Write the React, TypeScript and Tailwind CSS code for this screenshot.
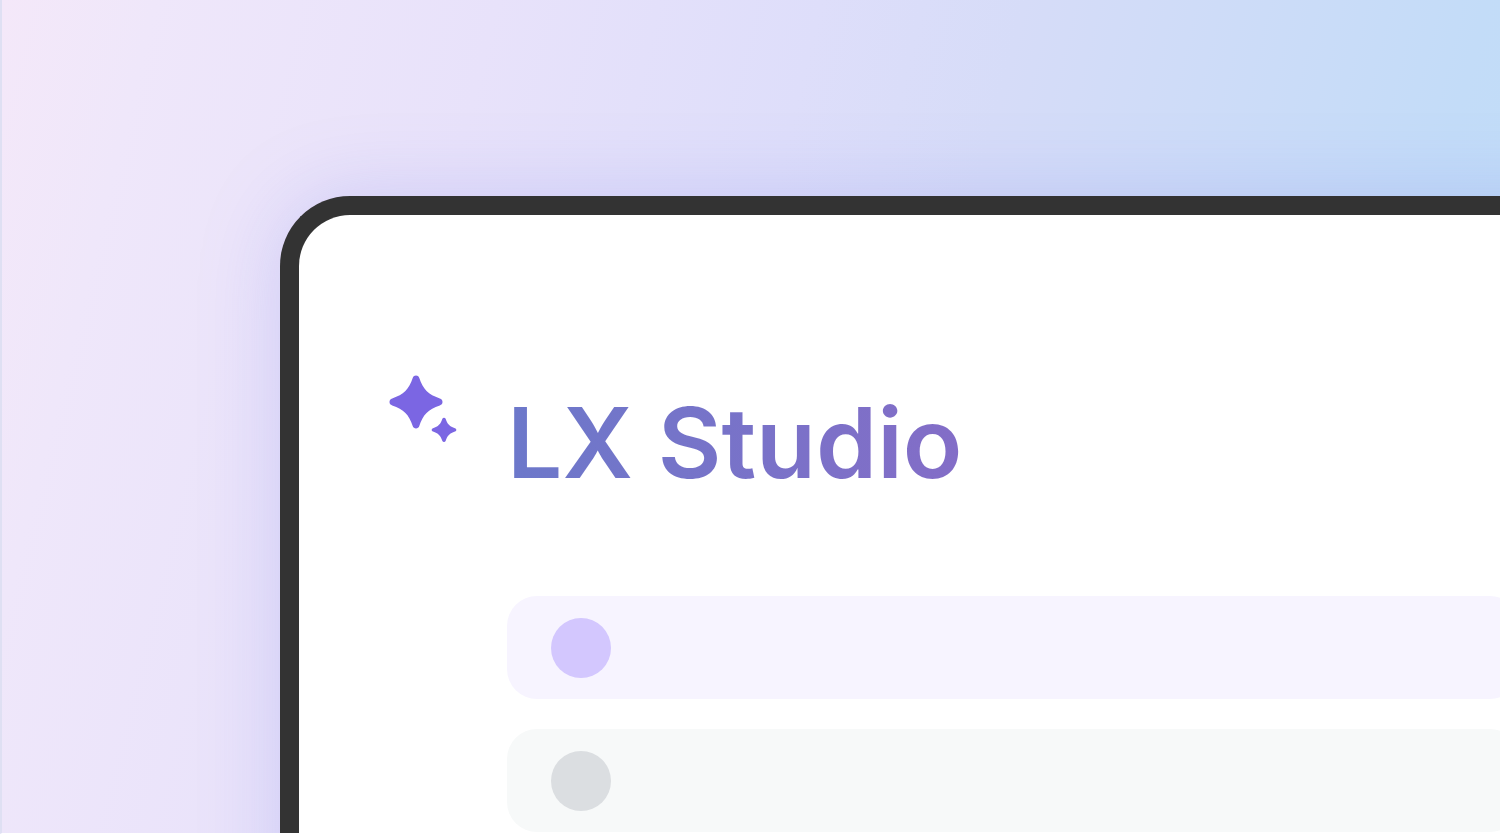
import React from 'react';

interface StudioRow {
  id: string;
  rowClass: string;
  dotClass: string;
}

const rows: StudioRow[] = [
  { id: 'active', rowClass: 'bg-[#f7f4ff]', dotClass: 'bg-[#d3c7fe]' },
  { id: 'idle', rowClass: 'bg-[#f7f9f9]', dotClass: 'bg-[#dbdee1]' },
];

function SparkleIcon() {
  return (
    <svg viewBox="0 0 68 68" className="h-[68px] w-[68px] shrink-0 fill-[#7b66e3]" aria-hidden="true">
      <path d="M27 0.5C28.6 0.5 29.6 1.4 30.2 2.8C34 14.4 39.2 19.6 50.8 23.4C52.5 24 53.5 25.2 53.5 27C53.5 28.8 52.5 29.8 50.8 30.4C39.2 34.2 34 39.6 30.2 51.2C29.6 52.6 28.6 53.4 27 53.4C25.4 53.4 24.4 52.6 23.8 51.2C20 39.6 14.8 34.2 3.2 30.4C1.5 29.8 0.5 28.8 0.5 27C0.5 25.2 1.5 24 3.2 23.4C14.8 19.6 20 14.4 23.8 2.8C24.4 1.4 25.4 0.5 27 0.5Z" />
      <path d="M55 42.7C55.8 42.7 56.3 43.1 56.6 43.8C58.3 49.1 60.8 51.6 66 53.3C66.8 53.6 67.3 54.2 67.3 54.9C67.3 55.6 66.8 56.2 66 56.5C60.8 58.2 58.3 60.7 56.6 66C56.3 66.7 55.8 67.1 55 67.1C54.2 67.1 53.7 66.7 53.4 66C51.7 60.7 49.2 58.2 44 56.5C43.2 56.2 42.7 55.6 42.7 54.9C42.7 54.2 43.2 53.6 44 53.3C49.2 51.6 51.7 49.1 53.4 43.8C53.7 43.1 54.2 42.7 55 42.7Z" />
    </svg>
  );
}

export default function App() {
  return (
    <main className="flex min-h-screen overflow-hidden border-b border-l-2 border-b-white border-l-[#dfe0f3] bg-[linear-gradient(104deg,#f4e8f9_0%,#efe7fa_9%,#e8e2fa_29%,#dedefa_48%,#d6dcf8_60%,#c3dcf8_87%,#bfddf8_100%)] pt-[196px] pl-[278px] font-['Inter',sans-serif]">
      {/* Window frame runs off the right and bottom edges */}
      <div className="-mr-24 -mb-24 min-w-0 flex-1 rounded-tl-[70px] border-t-[19px] border-l-[19px] border-[#333333] bg-white pr-[76px] pb-24 pl-[90px] shadow-[0_0_80px_rgba(125,130,235,0.26)]">
        <header className="flex items-start gap-[50px] pt-[160px]">
          <SparkleIcon />
          <h1 className="mt-[8px] bg-linear-to-r from-[#6c78ca] to-[#836dc7] bg-clip-text text-[98px] leading-[120px] font-semibold whitespace-nowrap text-transparent">
            LX Studio
          </h1>
        </header>

        <ul className="mt-[93px] ml-[118px] flex flex-col gap-[30px]">
          {rows.map((row) => (
            <li key={row.id} className={`flex h-[103px] items-center rounded-[30px] px-11 ${row.rowClass}`}>
              <span className={`h-[60px] w-[60px] rounded-full ${row.dotClass}`} />
            </li>
          ))}
        </ul>
      </div>
    </main>
  );
}
